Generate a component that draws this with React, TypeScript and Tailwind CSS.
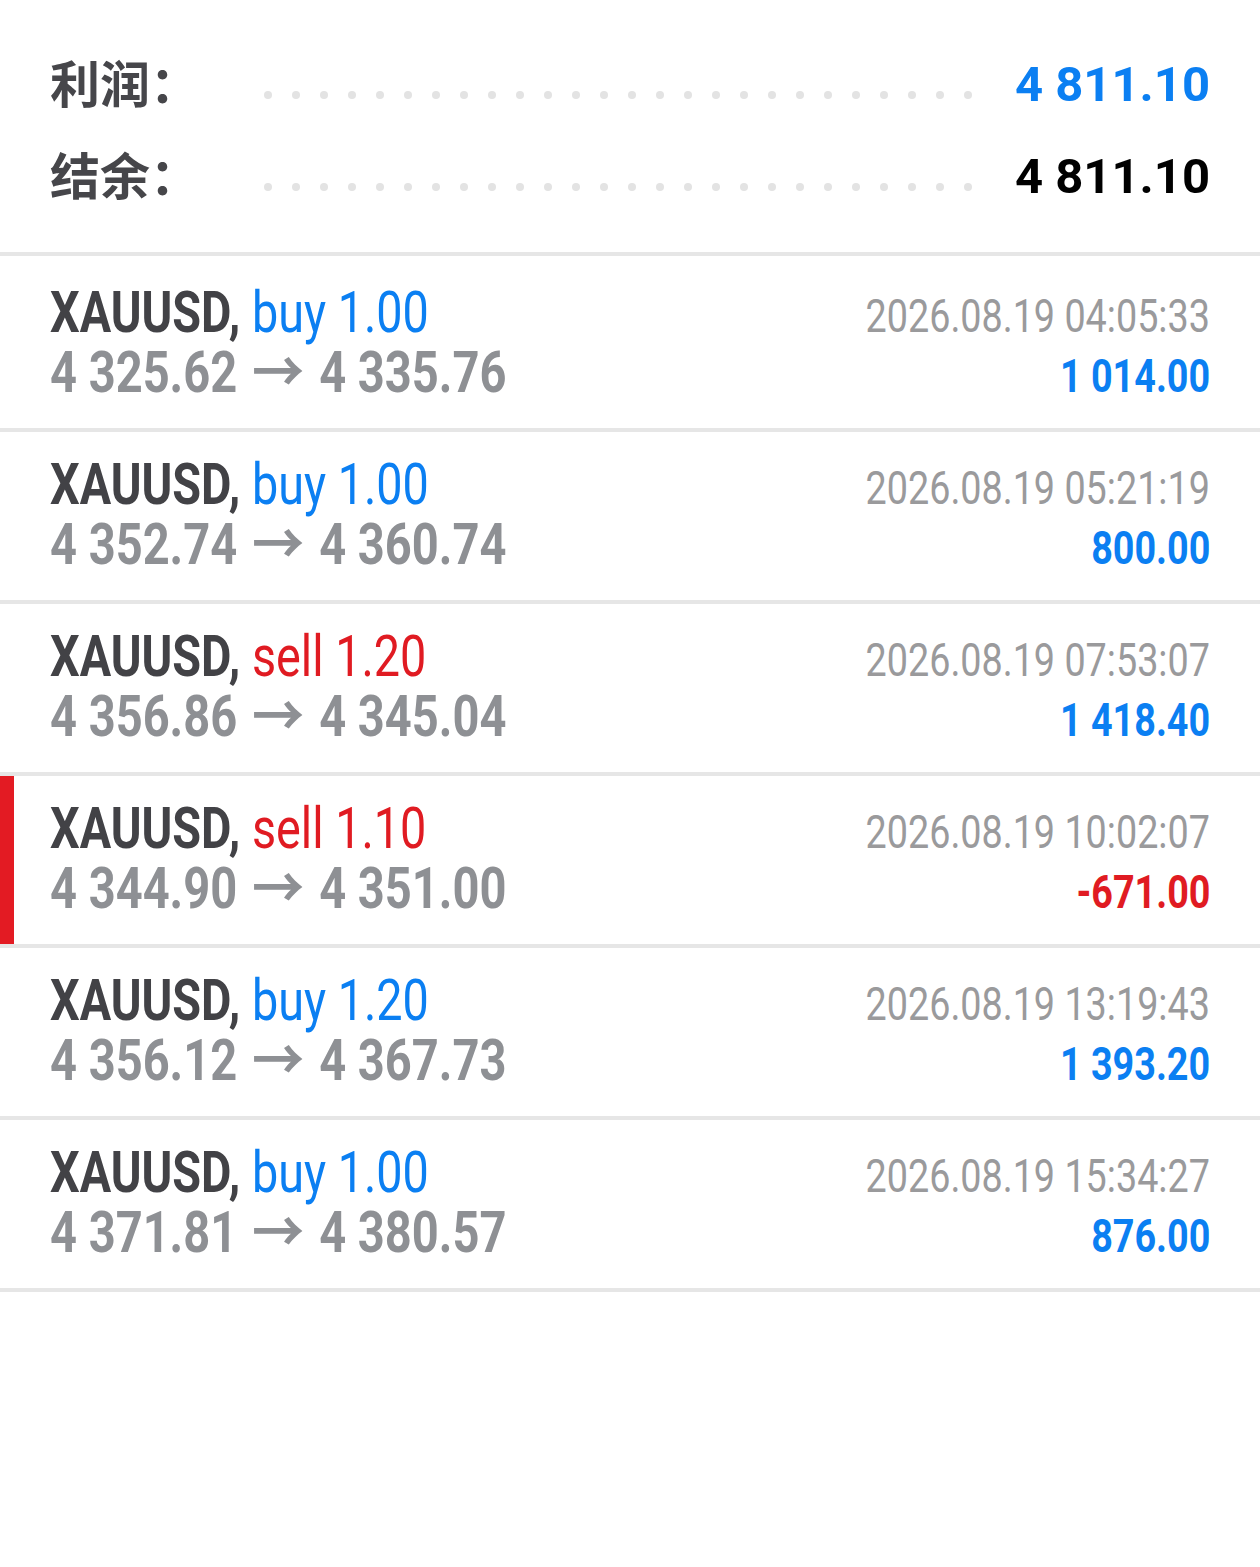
import React from "react";

type Trade = {
  side: "buy" | "sell";
  vol: string;
  open: string;
  close: string;
  time: string;
  profit: string;
  marked?: boolean;
};

const trades: Trade[] = [
  { side: "buy", vol: "1.00", open: "4 325.62", close: "4 335.76", time: "2026.08.19 04:05:33", profit: "1 014.00" },
  { side: "buy", vol: "1.00", open: "4 352.74", close: "4 360.74", time: "2026.08.19 05:21:19", profit: "800.00" },
  { side: "sell", vol: "1.20", open: "4 356.86", close: "4 345.04", time: "2026.08.19 07:53:07", profit: "1 418.40" },
  { side: "sell", vol: "1.10", open: "4 344.90", close: "4 351.00", time: "2026.08.19 10:02:07", profit: "-671.00", marked: true },
  { side: "buy", vol: "1.20", open: "4 356.12", close: "4 367.73", time: "2026.08.19 13:19:43", profit: "1 393.20" },
  { side: "buy", vol: "1.00", open: "4 371.81", close: "4 380.57", time: "2026.08.19 15:34:27", profit: "876.00" },
];

const font = { fontFamily: "Roboto, 'Noto Sans CJK SC', sans-serif" };

function Dots() {
  return (
    <div className="flex gap-[20px] mt-[20px]">
      {Array.from({ length: 26 }).map((_, i) => (
        <span key={i} className="block w-[8px] h-[8px] rounded-full bg-[#e3e3e3]" />
      ))}
    </div>
  );
}

function SummaryRow({ label, value, color }: { label: string; value: string; color: string }) {
  return (
    <div className="flex items-center h-[92px] pl-[50px] pr-[50px]">
      <div
        className="w-[214px] mb-[8px] text-[50px] leading-[50px] font-bold text-[#46464a]"
        style={{ fontFamily: "'Noto Sans CJK SC', sans-serif" }}
      >
        {label}
      </div>
      <Dots />
      <div className={`flex-1 text-right text-[49px] leading-[50px] font-bold ${color}`}>{value}</div>
    </div>
  );
}

function TradeRow({ t }: { t: Trade }) {
  const sideColor = t.side === "buy" ? "text-[#0b7ff2]" : "text-[#e01b22]";
  const profitColor = t.profit.startsWith("-") ? "text-[#e01b22]" : "text-[#0b7ff2]";
  return (
    <div
      className={`h-[168px] pt-[23px] pr-[50px] ${
        t.marked ? "border-l-[14px] border-[#e31b23] pl-[36px]" : "pl-[50px]"
      }`}
    >
      <div className="flex justify-between items-baseline">
        <span className="inline-block origin-left scale-x-[0.82] whitespace-nowrap text-[57px] leading-[60px]">
          <span className="font-bold text-[#424246]">XAUUSD,</span>{" "}
          <span className={sideColor}>
            {t.side} {t.vol}
          </span>
        </span>
        <span className="inline-block origin-right scale-x-[0.82] whitespace-nowrap text-[46px] leading-[50px] text-[#9a9a9c]">
          {t.time}
        </span>
      </div>
      <div className="flex justify-between items-baseline">
        <span className="inline-block origin-left scale-x-[0.825] whitespace-nowrap text-[57px] leading-[60px] font-bold text-[#8e9094]">
          {t.open} <span className="inline-block mx-[7px] scale-x-[1.11]">→</span> {t.close}
        </span>
        <span
          className={`inline-block origin-right scale-x-[0.82] whitespace-nowrap text-[46px] leading-[50px] font-bold ${profitColor}`}
        >
          {t.profit}
        </span>
      </div>
    </div>
  );
}

export default function App() {
  return (
    <div className="min-h-[1567px] w-full bg-white" style={font}>
      <div className="pt-[39px] pb-[29px]">
        <SummaryRow label="利润：" value="4 811.10" color="text-[#0b7ff2]" />
        <SummaryRow label="结余：" value="4 811.10" color="text-black" />
      </div>
      <div className="h-[4px] bg-[#e6e6e6]" />
      <div className="h-[4px]" />
      {trades.map((t, i) => (
        <React.Fragment key={i}>
          <TradeRow t={t} />
          <div className="h-[4px] bg-[#e6e6e6]" />
        </React.Fragment>
      ))}
    </div>
  );
}
